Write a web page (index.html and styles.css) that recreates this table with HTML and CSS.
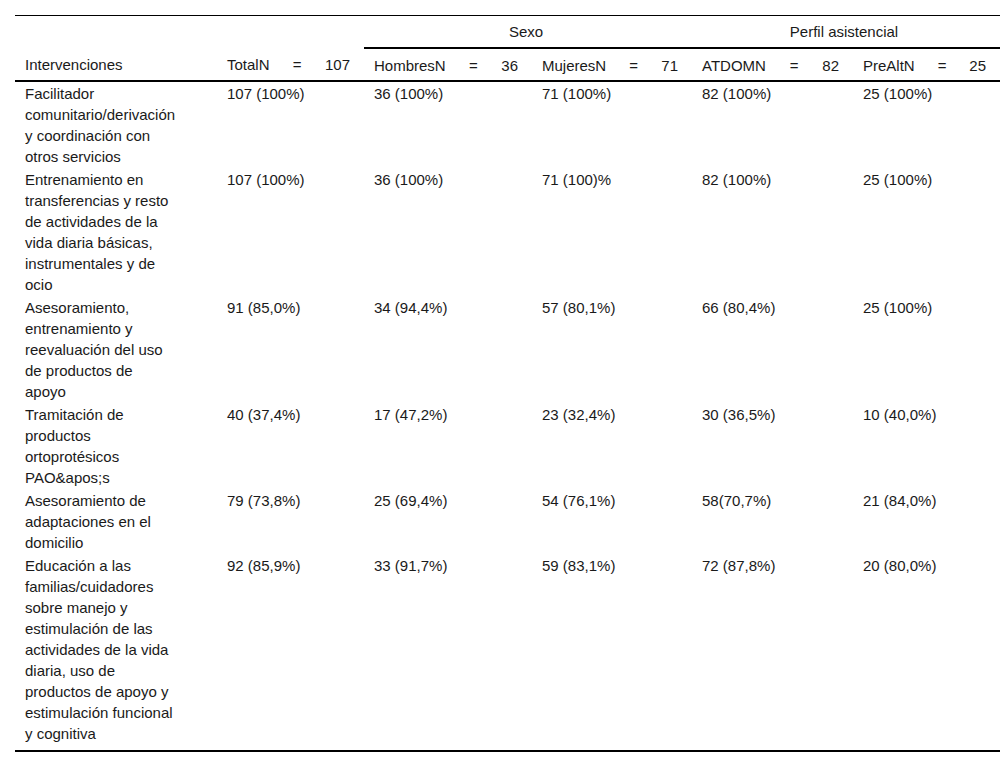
FILE: index.html
```html
<!DOCTYPE html>
<html lang="es">
<head>
<meta charset="utf-8">
<title>Intervenciones</title>
<link rel="stylesheet" href="styles.css">
</head>
<body>
<div class="wrap">
<table class="data">
  <colgroup>
    <col class="c1"><col class="c2"><col class="c3"><col class="c4"><col class="c5"><col class="c6">
  </colgroup>
  <thead>
    <tr class="group">
      <th></th>
      <th></th>
      <th colspan="2" class="grp">Sexo</th>
      <th colspan="2" class="grp">Perfil asistencial</th>
    </tr>
    <tr class="sub">
      <th class="first">Intervenciones</th>
      <th class="just">TotalN = 107</th>
      <th class="just">HombresN = 36</th>
      <th class="just">MujeresN = 71</th>
      <th class="just">ATDOMN = 82</th>
      <th class="just">PreAltN = 25</th>
    </tr>
  </thead>
  <tbody>
    <tr>
      <td class="first">Facilitador comunitario/derivación y coordinación con otros servicios</td>
      <td>107 (100%)</td><td>36 (100%)</td><td>71 (100%)</td><td>82 (100%)</td><td>25 (100%)</td>
    </tr>
    <tr>
      <td class="first">Entrenamiento en transferencias y resto de actividades de la vida diaria básicas, instrumentales y de ocio</td>
      <td>107 (100%)</td><td>36 (100%)</td><td>71 (100)%</td><td>82 (100%)</td><td>25 (100%)</td>
    </tr>
    <tr>
      <td class="first">Asesoramiento, entrenamiento y reevaluación del uso de productos de apoyo</td>
      <td>91 (85,0%)</td><td>34 (94,4%)</td><td>57 (80,1%)</td><td>66 (80,4%)</td><td>25 (100%)</td>
    </tr>
    <tr>
      <td class="first">Tramitación de productos ortoprotésicos PAO&amp;apos;s</td>
      <td>40 (37,4%)</td><td>17 (47,2%)</td><td>23 (32,4%)</td><td>30 (36,5%)</td><td>10 (40,0%)</td>
    </tr>
    <tr>
      <td class="first">Asesoramiento de adaptaciones en el domicilio</td>
      <td>79 (73,8%)</td><td>25 (69,4%)</td><td>54 (76,1%)</td><td>58(70,7%)</td><td>21 (84,0%)</td>
    </tr>
    <tr>
      <td class="first">Educación a las familias/cuidadores sobre manejo y estimulación de las actividades de la vida diaria, uso de productos de apoyo y estimulación funcional y cognitiva</td>
      <td>92 (85,9%)</td><td>33 (91,7%)</td><td>59 (83,1%)</td><td>72 (87,8%)</td><td>20 (80,0%)</td>
    </tr>
  </tbody>
</table>
</div>
</body>
</html>
```

FILE: styles.css
```css
html, body {
  margin: 0;
  padding: 0;
  background: #ffffff;
}

.wrap {
  padding: 15px 0 0 15px;
}

.data {
  width: 985px;
  table-layout: fixed;
  border-collapse: collapse;
  font-family: "Liberation Sans", Arial, sans-serif;
  font-size: 15px;
  line-height: 21px;
  color: #1a1a1a;
  border-top: 1px solid #000;
  border-bottom: 2px solid #000;
}

.c1 { width: 202px; }
.c2 { width: 147px; }
.c3 { width: 168px; }
.c4 { width: 160px; }
.c5 { width: 161px; }
.c6 { width: 147px; }

.data th {
  font-weight: normal;
  text-align: left;
  vertical-align: middle;
  padding: 0 14px 0 10px;
}

.group th {
  height: 31px;
}

.group th.grp {
  text-align: center;
  border-bottom: 2px solid #000;
}

.sub th {
  height: 30px;
  padding-top: 1px;
  border-bottom: 2px solid #000;
}

.just {
  text-align: justify;
  text-align-last: justify;
}

.data td {
  vertical-align: top;
  padding: 1px 14px 1px 10px;
}

.data td.first {
  padding-right: 40.5px;
}

.data tbody tr:last-child td {
  padding-bottom: 6px;
}
```
